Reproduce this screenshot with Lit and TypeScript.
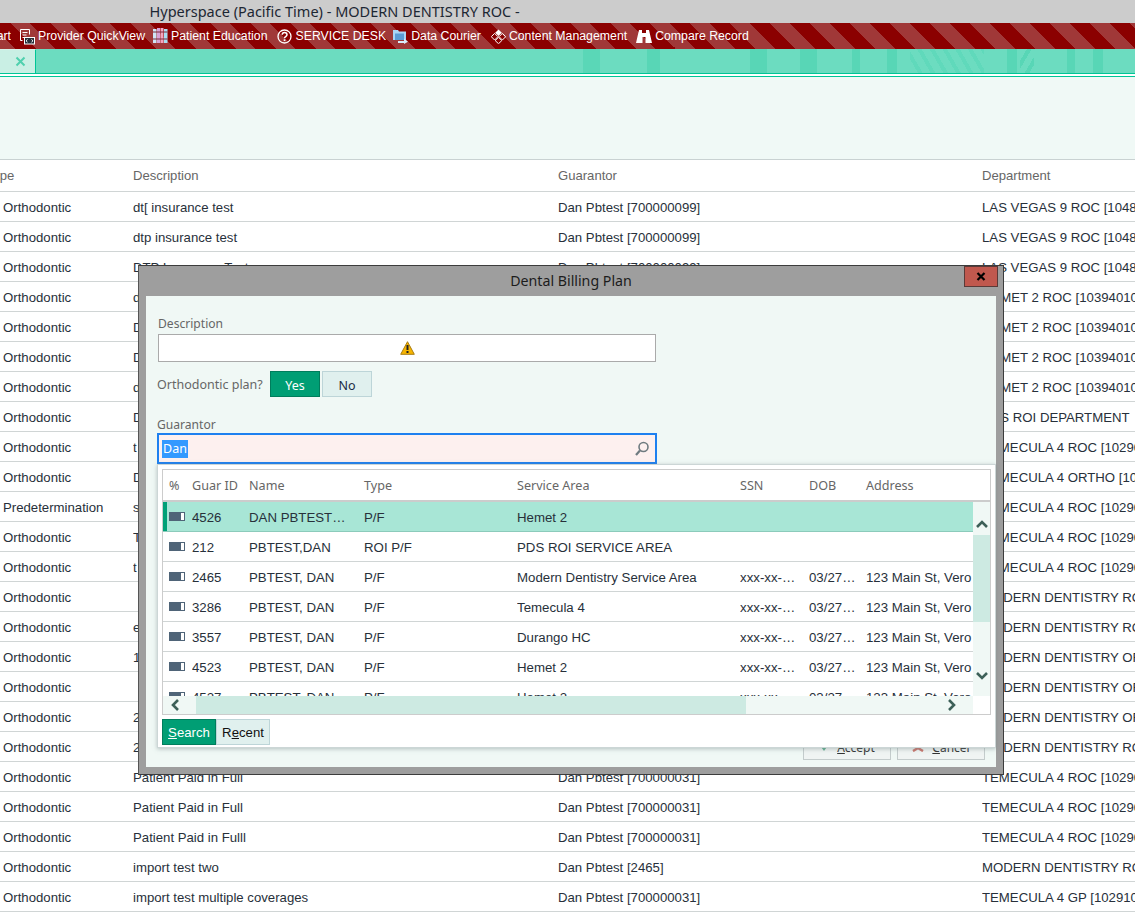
import { LitElement, html, css, svg } from "lit";
import { customElement } from "lit/decorators.js";

const LV = "LAS VEGAS 9 ROC [10480100]";
const HE = "HEMET 2 ROC [103940100]";
const TR = "TEMECULA 4 ROC [102900100]";
const TO = "TEMECULA 4 ORTHO [102900200]";
const MR = "MODERN DENTISTRY ROC";
const MO = "MODERN DENTISTRY ORTHO";
const D99 = "Dan Pbtest [700000099]";
const D31 = "Dan Pbtest [700000031]";
const O = "Orthodontic";

const rows: [string, string, string, string][] = [
  [O, "dt[ insurance test", D99, LV],
  [O, "dtp insurance test", D99, LV],
  [O, "DTP Insurance Test", D99, LV],
  [O, "d", "", HE],
  [O, "D", "", HE],
  [O, "D", "", HE],
  [O, "d", "", HE],
  [O, "D", "", "PDS ROI DEPARTMENT"],
  [O, "t", "", TR],
  [O, "D", "", TO],
  ["Predetermination", "s", "", TR],
  [O, "T", "", TR],
  [O, "t", "", TR],
  [O, "", "", MR],
  [O, "e", "", MR],
  [O, "1", "", MO],
  [O, "", "", MO],
  [O, "2", "", MO],
  [O, "2", "", MR],
  [O, "Patient Paid in Full", D31, TR],
  [O, "Patient Paid in Full", D31, TR],
  [O, "Patient Paid in Fulll", D31, TR],
  [O, "import test two", "Dan Pbtest [2465]", MR],
  [O, "import test multiple coverages", D31, "TEMECULA 4 GP [102910100]"],
];

const A = "123 Main St, Vero Beach";
const guars: [string, string, string, string, string, string, string][] = [
  ["4526", "DAN PBTEST…", "P/F", "Hemet 2", "", "", ""],
  ["212", "PBTEST,DAN", "ROI P/F", "PDS ROI SERVICE AREA", "", "", ""],
  ["2465", "PBTEST, DAN", "P/F", "Modern Dentistry Service Area", "xxx-xx-…", "03/27…", A],
  ["3286", "PBTEST, DAN", "P/F", "Temecula 4", "xxx-xx-…", "03/27…", A],
  ["3557", "PBTEST, DAN", "P/F", "Durango HC", "xxx-xx-…", "03/27…", A],
  ["4523", "PBTEST, DAN", "P/F", "Hemet 2", "xxx-xx-…", "03/27…", A],
  ["4527", "PBTEST, DAN", "P/F", "Hemet 2", "xxx-xx-…", "03/27…", A],
];

const icons = {
  provider: svg`<svg width="16" height="17" viewBox="0 0 16 17"><path d="M1.500 1.500h9v5M1.500 1.500v11h2M3.500 4.500h5M3.500 7h4M3.500 9.500h2" fill="none" stroke="#fff"/><rect x="5.500" y="9.500" width="10" height="6.500" fill="#27303a" stroke="#fff"/><path d="M8.500 11.500l-1.500 1.300 1.500 1.300M12.500 11.500l1.500 1.300-1.500 1.300" fill="none" stroke="#fff"/></svg>`,
  books: svg`<svg width="15" height="16" viewBox="0 0 15 16"><rect x="0" y="1" width="3.500" height="14" fill="#cfe6f7"/><rect x="4" y="0" width="3" height="15" fill="#d8a4d8"/><rect x="7.500" y="0" width="3" height="15" fill="#f2a6bf"/><rect x="11" y="1" width="3.500" height="14" fill="#a9dff2"/><path d="M0 4h14.500M0 11h14.500" stroke="#7a2a3a"/></svg>`,
  help: svg`<svg width="15" height="15" viewBox="0 0 15 15"><circle cx="7.500" cy="7.500" r="6.500" fill="none" stroke="#fff" stroke-width="1.300"/><path d="M5.200 5.800c0-3 4.800-3 4.800 0 0 1.800-2.500 1.800-2.500 3.500" fill="none" stroke="#fff" stroke-width="1.500"/><rect x="6.700" y="10.300" width="1.700" height="1.700" fill="#fff"/></svg>`,
  courier: svg`<svg width="15" height="16" viewBox="0 0 15 16"><path d="M0 2h5l1 1.500h7V12H0z" fill="#a9d4f5"/><path d="M2 5.500h9V12H2z" fill="#5b9bd5"/><path d="M5 13h6v-2.500l4 3.200-4 2.300V15H5z" fill="#d8ecfb"/></svg>`,
  content: svg`<svg width="15" height="15" viewBox="0 0 15 15"><path d="M7.500 .5l3.300 3.300-3.300 3.300-3.300-3.300z" fill="#fff"/><path d="M3.600 4.400l3.300 3.300-3.300 3.300L.3 7.700zM11.400 4.400l3.300 3.300-3.300 3.300-3.300-3.300zM7.500 8.300l3.300 3.300-3.300 3.100-3.300-3.100z" fill="none" stroke="#fff"/></svg>`,
  binoc: svg`<svg width="16" height="15" viewBox="0 0 16 15"><path d="M3 1h3v3h4V1h3l3 13H9.500V8h-3v6H0z" fill="#fff"/></svg>`,
};

@customElement("app-root")
export class AppRoot extends LitElement {
  static styles = css`
    :host { display: block; width: 1135px; height: 920px; position: relative; overflow: hidden; background: #fff; font-family: "Liberation Sans", Arial, sans-serif; }
    .title { height: 23px; background: #cccccc; padding-left: 149.500px; font: 14.500px/22px "Noto Sans", sans-serif; color: #1c2733; box-sizing: border-box; }
    .toolbar { height: 26px; display: flex; align-items: center; gap: 8px; color: #fff; font-size: 12.300px; white-space: nowrap;
      background: repeating-linear-gradient(45deg, #a03838 0 11.310px, #8b0000 11.310px 25.460px, #a03838 25.460px 28.284px); }
    .tool { display: flex; align-items: center; gap: 3px; }
    .tool.first { width: 11px; overflow: hidden; justify-content: flex-end; }
    .tool.ml2 { margin-left: 2px; }
    .tool.ml1 { margin-left: 1px; }
    .tool.mlm1 { margin-left: -1px; }
    .tabs { height: 25px; box-sizing: border-box; border-bottom: 1px solid #00c596; display: flex;
      background:
        repeating-linear-gradient(60deg, #6cdcc0 0 7px, #60d9bb 7px 11px) 910px 0 / 74px 24px no-repeat,
        repeating-linear-gradient(120deg, #6cdcc0 0 6px, #58d6b6 6px 10px) 1020px 0 / 14px 24px no-repeat,
        linear-gradient(90deg,
          #6cdcc0 0 583px, #5ad7b7 583px 600px, #6cdcc0 600px 647px, #58d6b6 647px 660px,
          #6cdcc0 660px 750px, #58d6b6 750px 767px, #6cdcc0 767px 800px, #58d6b6 800px 817px,
          #6cdcc0 817px 852px, #58d6b6 852px 860px, #6cdcc0 860px 887px, #58d6b6 887px 897px,
          #6cdcc0 897px 1007px, #58d6b6 1007px 1017px, #6cdcc0 1017px 1067px, #58d6b6 1067px 1075px,
          #6cdcc0 1075px 1093px, #58d6b6 1093px 1103px, #6cdcc0 1103px 1135px); }
    .tab { width: 36px; height: 24px; box-sizing: border-box; background: #c9efe4; border-right: 1px solid #00c596; border-top: 1px solid #d8f3ea; display: flex; align-items: center; justify-content: flex-end; padding-right: 9px; }
    .gap { height: 2px; background: #fff; }
    .banner { height: 84px; box-sizing: border-box; background: #f0f9f6; border-top: 1px solid #00c596; border-bottom: 1px solid #c9d2d2; }
    .grid { display: grid; grid-template-columns: 133px 425px 424px 1fr; }
    .cell { height: 30px; box-sizing: border-box; border-bottom: 1px solid #d0d5d5; line-height: 31px; font-size: 13.200px; color: #27303a; white-space: nowrap; overflow: hidden; }
    .cell.first { padding-left: 3px; }
    .head { height: 32px; line-height: 32px; color: #666; border-bottom: 1px solid #d0d5d5; font-size: 13.100px; }
    .head .clip { margin-left: -17px; display: inline-block; }

    .dialog { position: absolute; left: 138px; top: 265px; width: 866px; height: 510px; box-sizing: border-box; background: #9e9e9e; border: 1px solid #3c3c3c; border-left-color: #555; display: flex; flex-direction: column; }
    .dtitle { height: 30px; flex: none; text-align: center; font: 14.200px/30px "Noto Sans", sans-serif; color: #1c1c1c; }
    .close { position: absolute; right: 5px; top: 0; width: 34px; height: 21px; box-sizing: border-box; background: #c0584e; border: 1px solid #5a3a38; display: flex; align-items: center; justify-content: center; }
    .dbody { flex: 1; margin: 0 7px 7px 7px; background: #f0f8f5; padding: 19px 12px 0; position: relative; font-family: "Noto Sans", sans-serif; }
    .label { font-size: 12.100px; line-height: 17px; color: #666; }
    .desc { width: 498px; height: 28px; margin-top: 2px; box-sizing: border-box; background: #fff; border: 1px solid #aaa; display: flex; align-items: center; justify-content: center; }
    .ortho { display: flex; align-items: center; gap: 2px; margin-top: 9px; height: 26px; margin-left: -1px; }
    .ortho .label { width: 111px; margin-top: 1px; font-size: 12.500px; }
    .btn { width: 50px; height: 26px; box-sizing: border-box; display: flex; align-items: center; justify-content: center; font-size: 12.500px; padding-top: 3px; }
    .on { background: #009e74; border: 1px solid #007d5c; color: #fff; }
    .off { background: #e0f0ee; border: 1px solid #bdd5d8; color: #1c2c44; }
    .glabel { margin-top: 19px; margin-left: -1px; }
    .ginput { width: 500px; height: 31px; margin-left: -1px; box-sizing: border-box; background: #fdf0ef; border: 2px solid #1e80f0; display: flex; align-items: center; padding: 0 5px 0 3px; justify-content: space-between; }
    .sel { background: #3399ff; color: #fff; font-size: 12.500px; line-height: 18px; height: 18px; padding: 0 1px; margin-top: 1px; }
    .footer { position: absolute; right: 11px; top: 439px; display: flex; gap: 6px; }
    .fbtn { width: 88px; height: 25px; box-sizing: border-box; background: #f0f4f3; border: 1px solid #c4cccc; display: flex; align-items: center; justify-content: center; gap: 8px; font-size: 12px; color: #333; }

    .popup { position: absolute; left: 11px; top: 168px; width: 839px; height: 284px; box-sizing: border-box; background: #fff; border: 1px solid #ccd6d6; box-shadow: 0 1px 4px rgba(120,140,140,.5); padding: 4px 4px 0 4px; font-family: "Liberation Sans", Arial, sans-serif; }
    .ggrid { height: 246px; box-sizing: border-box; border: 1px solid #ccc; display: grid; grid-template-columns: 810px 17px; grid-template-rows: 32px 194px 18px; }
    .ghead { grid-column: 1 / 3; border-bottom: 2px solid #ccc; box-sizing: border-box; }
    .gcols { display: grid; grid-template-columns: 6px 23px 57px 115px 153px 223px 69px 57px 107px; align-items: center; white-space: nowrap; font-size: 13.250px; }
    .ghead.gcols { height: 32px; color: #666; font-family: "Noto Sans", sans-serif; font-size: 12.600px; padding-top: 1px; }
    .gbody { height: 194px; overflow: hidden; }
    .grow { height: 30px; box-sizing: border-box; border-bottom: 1px solid #d0d5d5; color: #27303a; position: relative; overflow: hidden; padding-top: 1px; }
    .grow > span { overflow: hidden; }
    .grow.active { background: #a8e6d6; border-bottom-color: #8ccbbb; }
    .bar { background: #00a077; height: 30px; width: 4px; position: absolute; left: 0; top: 0; }
    .meter { width: 16px; height: 9px; box-sizing: border-box; background: #4f6478; border: 1px solid #4f6478; position: relative; margin-bottom: 1px; }
    .meter::after { content: ""; position: absolute; right: 0; top: 0; bottom: 0; width: 3px; background: #fff; }
    .vbar { background: #f0f8f5; display: flex; flex-direction: column; }
    .vup { height: 33px; display: flex; align-items: center; justify-content: center; padding-top: 10px; box-sizing: border-box; }
    .vthumb { height: 87px; background: #cdeae2; }
    .vdown { flex: 1; display: flex; align-items: flex-end; justify-content: center; padding-bottom: 15px; }
    .hbar { background: #f0f8f5; display: flex; align-items: center; }
    .hleft { width: 33px; display: flex; justify-content: center; box-sizing: border-box; padding-right: 9px; }
    .hthumb { width: 550px; height: 18px; background: #cdeae2; }
    .hright { flex: 1; display: flex; justify-content: flex-end; padding-right: 16px; }
    .corner { background: #fff; }
    .tabsrow { display: flex; margin-top: 4px; }
    .tabsrow .btn { width: 54px; font-size: 13.200px; padding-top: 0; }
    .tabsrow .off { color: #111; }
    svg { display: block; }
  `;

  private chev(d: string) {
    return html`<svg width="12" height="10" viewBox="0 0 12 10"><path d="${d}" fill="none" stroke="#3d6058" stroke-width="2.600"/></svg>`;
  }

  render() {
    return html`
      <div class="title">Hyperspace (Pacific Time) - MODERN DENTISTRY ROC -</div>
      <div class="toolbar">
        <div class="tool first">art</div>
        <div class="tool">${icons.provider}Provider QuickView</div>
        <div class="tool">${icons.books}Patient Education</div>
        <div class="tool ml2">${icons.help}SERVICE DESK</div>
        <div class="tool mlm1">${icons.courier}Data Courier</div>
        <div class="tool ml2">${icons.content}Content Management</div>
        <div class="tool ml1">${icons.binoc}Compare Record</div>
      </div>
      <div class="tabs">
        <div class="tab"><svg width="11" height="11" viewBox="0 0 11 11"><path d="M1.500 1.500l8 8M9.500 1.500l-8 8" stroke="#4fd0ae" stroke-width="2"/></svg></div>
      </div>
      <div class="gap"></div>
      <div class="banner"></div>
      <div class="grid">
        <div class="cell head first"><span class="clip">Type</span></div>
        <div class="cell head">Description</div>
        <div class="cell head">Guarantor</div>
        <div class="cell head">Department</div>
        ${rows.map(r => html`
          <div class="cell first">${r[0]}</div>
          <div class="cell">${r[1]}</div>
          <div class="cell">${r[2]}</div>
          <div class="cell">${r[3]}</div>`)}
      </div>

      <div class="dialog">
        <div class="dtitle">Dental Billing Plan</div>
        <div class="close"><svg width="10" height="9" viewBox="0 0 10 9"><path d="M1.500 1l7 7M8.500 1l-7 7" stroke="#000" stroke-width="2.200"/></svg></div>
        <div class="dbody">
          <div class="label">Description</div>
          <div class="desc">
            <svg width="15" height="14" viewBox="0 0 15 14"><path d="M7.500 .7L14.300 13.300H.7z" fill="#f7b500" stroke="#a87c10"/><path d="M7.500 4v5" stroke="#222" stroke-width="2"/><rect x="6.500" y="10" width="2" height="2" fill="#222"/></svg>
          </div>
          <div class="ortho">
            <div class="label">Orthodontic plan?</div>
            <div class="btn on">Yes</div>
            <div class="btn off">No</div>
          </div>
          <div class="label glabel">Guarantor</div>
          <div class="ginput">
            <span class="sel">Dan</span>
            <svg width="16" height="16" viewBox="0 0 16 16"><circle cx="9.500" cy="6" r="4.500" fill="none" stroke="#6f7b80" stroke-width="1.600"/><path d="M6 9.500L2 14" stroke="#6f7b80" stroke-width="2.200"/></svg>
          </div>
          <div class="footer">
            <div class="fbtn"><svg width="10" height="8" viewBox="0 0 10 8"><path d="M0 0h10L5 7z" fill="#5fae8e"/></svg><span><u>A</u>ccept</span></div>
            <div class="fbtn"><svg width="12" height="8" viewBox="0 0 12 8"><path d="M1 7l10-6M11 7L1 1" stroke="#c9736a" stroke-width="2.500"/></svg><span><u>C</u>ancel</span></div>
          </div>
          <div class="popup">
            <div class="ggrid">
              <div class="ghead gcols">
                <span></span><span>%</span><span>Guar ID</span><span>Name</span><span>Type</span><span>Service Area</span><span>SSN</span><span>DOB</span><span>Address</span>
              </div>
              <div class="gbody">
                ${guars.map((g, i) => html`
                  <div class="grow gcols ${i === 0 ? "active" : ""}">
                    ${i === 0 ? html`<div class="bar"></div>` : ""}
                    <span></span><div class="meter"></div>
                    ${g.map(v => html`<span>${v}</span>`)}
                  </div>`)}
              </div>
              <div class="vbar">
                <div class="vup">${this.chev("M1 8l5-5 5 5")}</div>
                <div class="vthumb"></div>
                <div class="vdown">${this.chev("M1 2l5 5 5-5")}</div>
              </div>
              <div class="hbar">
                <div class="hleft"><svg width="10" height="12" viewBox="0 0 10 12"><path d="M8 1L3 6l5 5" fill="none" stroke="#3d6058" stroke-width="2.600"/></svg></div>
                <div class="hthumb"></div>
                <div class="hright"><svg width="10" height="12" viewBox="0 0 10 12"><path d="M2 1l5 5-5 5" fill="none" stroke="#3d6058" stroke-width="2.600"/></svg></div>
              </div>
              <div class="corner"></div>
            </div>
            <div class="tabsrow">
              <div class="btn on"><span><u>S</u>earch</span></div>
              <div class="btn off"><span>R<u>e</u>cent</span></div>
            </div>
          </div>
        </div>
      </div>
    `;
  }
}
